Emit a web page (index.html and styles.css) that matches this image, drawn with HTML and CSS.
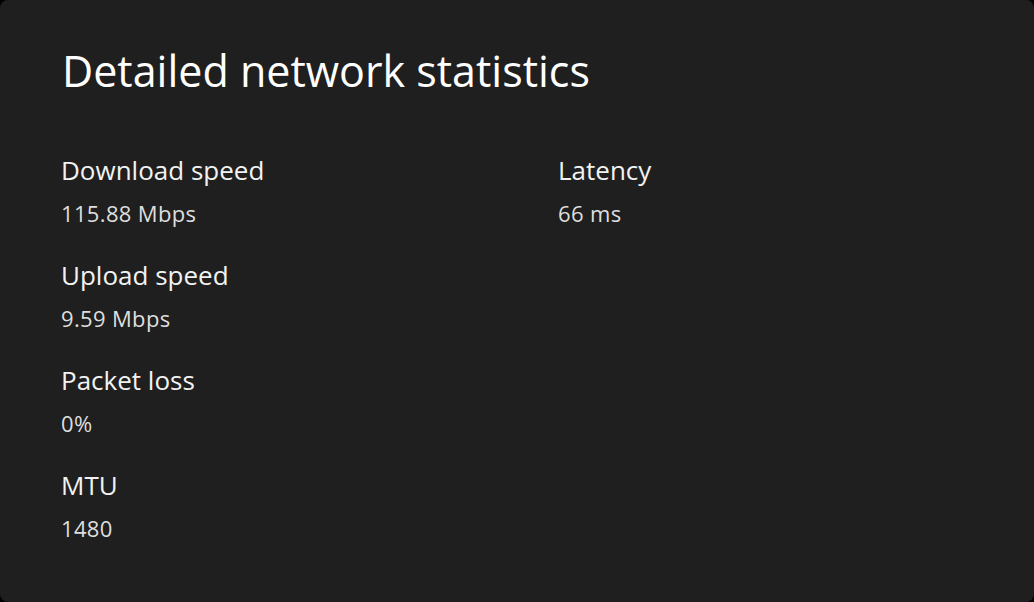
FILE: index.html
```html
<!DOCTYPE html>
<html lang="en">
<head>
<meta charset="utf-8">
<title>Detailed network statistics</title>
<link rel="stylesheet" href="styles.css">
</head>
<body>
<main class="panel">
  <h1 class="title">Detailed network statistics</h1>
  <div class="grid">
    <div class="col">
      <div class="stat"><div class="label">Download speed</div><div class="value">115.88 Mbps</div></div>
      <div class="stat"><div class="label">Upload speed</div><div class="value">9.59 Mbps</div></div>
      <div class="stat"><div class="label">Packet loss</div><div class="value">0%</div></div>
      <div class="stat"><div class="label">MTU</div><div class="value">1480</div></div>
    </div>
    <div class="col">
      <div class="stat"><div class="label">Latency</div><div class="value">66 ms</div></div>
    </div>
  </div>
</main>
</body>
</html>
```
FILE: styles.css
```css
html, body {
  margin: 0;
  padding: 0;
  background: #000;
  height: 100%;
}
.panel {
  box-sizing: border-box;
  width: 1034px;
  height: 602px;
  background: #1f1f1f;
  border-radius: 8px;
  padding: 44px 61px 0 61px;
  font-family: "Open Sans", "Noto Sans", sans-serif;
  color: #f2f2f2;
}
.title {
  margin: 0 0 0 1px;
  font-size: 43px;
  font-weight: 400;
  line-height: 54px;
  color: #ffffff;
}
.grid {
  display: grid;
  grid-template-columns: 497px 1fr;
  margin-top: 51px;
}
.col {
  display: flex;
  flex-direction: column;
  gap: 19px;
}
.label {
  font-size: 26px;
  line-height: 42px;
  color: #f2f2f2;
}
.value {
  font-size: 22px;
  letter-spacing: 0.35px;
  line-height: 44px;
  color: #dedede;
}
```
